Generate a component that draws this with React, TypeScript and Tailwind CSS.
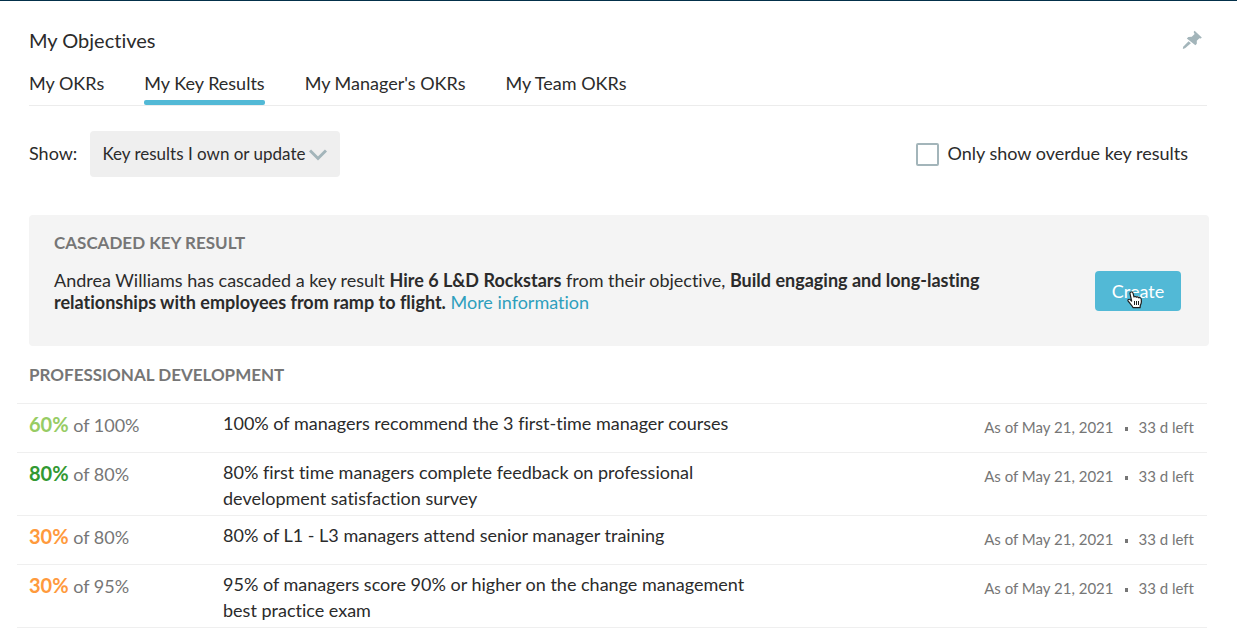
import React, { useState } from "react";

const tabs = ["My OKRs", "My Key Results", "My Manager's OKRs", "My Team OKRs"];

const keyResults = [
  {
    progress: "60%",
    color: "text-[#97cc64]",
    target: "100%",
    title: "100% of managers recommend the 3 first-time manager courses",
  },
  {
    progress: "80%",
    color: "text-[#329932]",
    target: "80%",
    title: "80% first time managers complete feedback on professional development satisfaction survey",
  },
  {
    progress: "30%",
    color: "text-[#ff9a3c]",
    target: "80%",
    title: "80% of L1 - L3 managers attend senior manager training",
  },
  {
    progress: "30%",
    color: "text-[#ff9a3c]",
    target: "95%",
    title: "95% of managers score 90% or higher on the change management best practice exam",
  },
];

const PinIcon = () => (
  <svg viewBox="0 0 20 20" className="h-5 w-5" fill="currentColor" aria-hidden="true">
    <path d="M12.6 .8 L19.8 7.4 L18.8 8.4 L17.4 8.2 L14.8 10.8 L14.8 13.8 L13.4 15.2 L4.8 8.4 L6.4 6.9 L9.8 6.7 L12.6 4 L11.6 2 Z" />
    <path d="M6.6 11.2 L8.9 13.3 L3 18.2 L.8 18.9 L1.2 16.8 Z" />
  </svg>
);

const HandCursor = () => (
  <svg viewBox="0 0 16 18" className="h-[18px] w-4" aria-hidden="true">
    <path
      d="M4.2 1 C5.3 .8 5.9 1.5 6.1 2.3 L7 6 C7.6 5.2 9 5.4 9.3 6.2 C10 5.6 11.3 5.9 11.6 6.8 C12.6 6.3 14 6.9 14.2 8 L14.4 10.6 C14.5 12 13.9 13.2 13.3 14.4 L13.1 16.6 H6 C5.4 14.6 3.4 13.2 2.2 11.4 L1 9.8 C.6 8.6 2 7.8 3 8.6 L4.6 10 L3 2.6 C2.9 1.8 3.4 1.1 4.2 1 Z"
      fill="white"
      stroke="#1f1f1f"
      strokeWidth="1.2"
      strokeLinejoin="round"
    />
    <path d="M7.5 10 V14 M9.5 10 V14 M11.5 10 V14" stroke="#1f1f1f" strokeWidth="1" fill="none" />
  </svg>
);

const App = () => {
  const [activeTab, setActiveTab] = useState("My Key Results");
  const [overdueOnly, setOverdueOnly] = useState(false);

  return (
    <main className="border-t border-[#03304a] bg-white pb-1 pl-[29px] pr-7 font-['Lato',sans-serif] text-lg text-[#2b2b2b] [font-variant-ligatures:none]">
      {/* Header */}
      <header className="flex items-center justify-between pr-[7px] pt-[23px]">
        <h1 className="text-xl leading-8">My Objectives</h1>
        <button type="button" aria-label="Pin" className="text-[#a3b5ba]">
          <PinIcon />
        </button>
      </header>

      {/* Tabs */}
      <nav className="mr-0.5 mt-[13px] flex gap-10 border-b border-[#ececec]">
        {tabs.map((tab) => (
          <button
            key={tab}
            type="button"
            onClick={() => setActiveTab(tab)}
            className="flex flex-col"
          >
            <span className="pb-[3px] leading-7">{tab}</span>
            <span
              className={
                tab === activeTab ? "h-[5px] w-full rounded-xs bg-[#52b9d6]" : "h-[5px] w-full"
              }
            />
          </button>
        ))}
      </nav>

      {/* Filters */}
      <div className="mt-[25px] flex items-center justify-between pr-[21px]">
        <div className="flex items-center gap-[13px]">
          <label htmlFor="show" className="pb-0.5">
            Show:
          </label>
          <div className="relative">
            <select
              id="show"
              className="h-[46px] appearance-none rounded bg-[#efefef] pl-3 pr-[34px] text-[17px]"
            >
              <option>Key results I own or update</option>
            </select>
            <svg
              viewBox="0 0 18 12"
              className="pointer-events-none absolute right-[13px] top-[18px] h-3 w-[18px]"
              fill="none"
              stroke="#a3b5ba"
              strokeWidth="3"
              aria-hidden="true"
            >
              <path d="M1 1.5 L9 9.5 L17 1.5" />
            </svg>
          </div>
        </div>
        <label className="flex items-center gap-2">
          <input
            type="checkbox"
            checked={overdueOnly}
            onChange={(e) => setOverdueOnly(e.target.checked)}
            className="h-[23px] w-[23px] appearance-none rounded-xs border-2 border-[#a3b5ba] checked:bg-[#52b9d6]"
          />
          <span className="pb-0.5">Only show overdue key results</span>
        </label>
      </div>

      {/* Cascaded key result */}
      <section className="mt-[38px] flex items-center justify-between rounded bg-[#f4f4f4] pb-[33px] pl-[25px] pr-7 pt-4">
        <div className="max-w-[940px]">
          <h2 className="text-[17px] font-bold leading-6 text-[#767676]">CASCADED KEY RESULT</h2>
          <p className="mt-3.5 leading-[22px]">
            Andrea Williams has cascaded a key result <b>Hire 6 L&amp;D Rockstars</b> from their
            objective,{" "}
            <b>Build engaging and long-lasting relationships with employees from ramp to flight.</b>{" "}
            <a href="#more" className="text-[#2e9fbd]">
              More information
            </a>
          </p>
        </div>
        <button
          type="button"
          className="relative mt-[38px] h-10 w-[86px] rounded bg-[#52b9d6] text-white"
        >
          Create
          <span className="absolute left-8 top-5">
            <HandCursor />
          </span>
        </button>
      </section>

      {/* Key results */}
      <h2 className="mt-[17px] text-[17px] font-bold leading-6 text-[#767676]">
        PROFESSIONAL DEVELOPMENT
      </h2>
      <div className="-ml-3 mr-0.5 mt-4">
        <table className="w-full border-b border-[#efefef]">
          <tbody>
            {keyResults.map(({ progress, color, target, title }) => (
              <tr key={title} className="h-[49px] border-t border-[#efefef] align-top">
                <td className="w-[206px] pl-3 pt-1.5 leading-[26px] text-[#767676]">
                  <span className={`text-xl font-bold ${color}`}>{progress}</span> of {target}
                </td>
                <td className="pb-1 pt-1.5 leading-[26px]">
                  <div className="max-w-[536px]">{title}</div>
                </td>
                <td className="whitespace-nowrap pr-[13px] pt-[11px] text-right text-[15px] leading-6 text-[#767676]">
                  As of May 21, 2021
                  <span className="mx-[11px] inline-block h-1 w-[3px] bg-[#767676] align-middle" />
                  33 d left
                </td>
              </tr>
            ))}
          </tbody>
        </table>
      </div>
    </main>
  );
};

export default App;
